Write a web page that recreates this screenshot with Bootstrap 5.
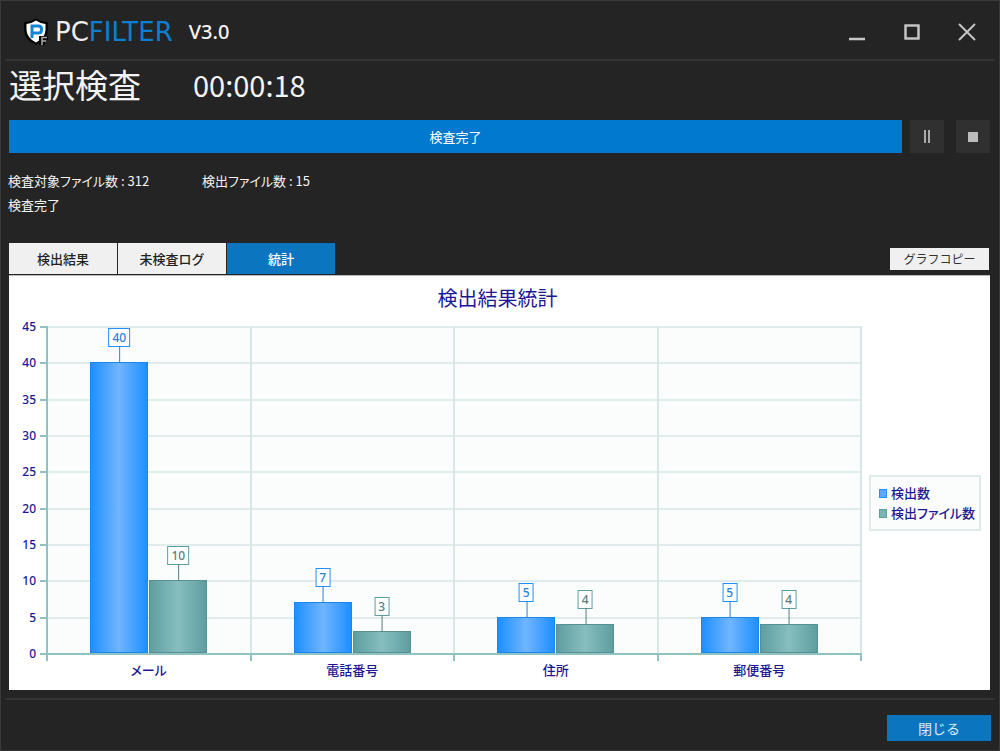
<!DOCTYPE html>
<html lang="ja">
<head>
<meta charset="utf-8">
<meta name="viewport" content="width=device-width, initial-scale=1">
<title>PCFILTER V3.0</title>
<link href="https://cdn.jsdelivr.net/npm/bootstrap@5.3.0/dist/css/bootstrap.min.css" rel="stylesheet">
<style>
  :root { --ink: #242424; --line: #3a3a3a; --blue: #0079cf; --tab: #0b76bf; --navy: #1c1894; --grid: #d6e7e6; --axis: #8fc3c3; --s1: #1e90ff; --s2: #5f9ea0; }
  body { background: var(--ink); color: #f4f4f4; font-family: "Noto Sans CJK JP", sans-serif; font-size: 13px; line-height: 20px; font-feature-settings: "palt"; }
  .app-window { border: 1px solid var(--line); border-bottom-color: #333; }
  .title-bar { height: 58px; padding: 4px 21px 0 22px; }
  .rule-line { height: 2px; background: #333; margin: 0 4px; }
  .brand { font-family: "DejaVu Sans", sans-serif; font-size: 26px; line-height: 30px; color: #eee; }
  .brand span { color: #0c7fd2; }
  .version { font-family: "Noto Sans", sans-serif; font-size: 20px; font-weight: 500; line-height: 30px; color: #f4f4f4; }
  .win-btn { width: 23px; height: 23px; }
  .icon-btn { border: 0; padding: 0; background: none; display: flex; align-items: center; justify-content: center; }
  .scan-head { height: 59px; padding: 0 8px; gap: 52px; }
  .scan-name { font-size: 33px; font-weight: 400; line-height: 46px; margin: 0; font-feature-settings: normal; }
  .scan-time { font-size: 29px; line-height: 46px; font-feature-settings: normal; }
  .scan-bar { height: 33px; padding: 0 9px 0 8px; gap: 8px; }
  .scan-bar .progress { height: 33px; border-radius: 0; background: #333; font-size: 13px; }
  .scan-bar .progress-bar { background: var(--blue); }
  .ctl { width: 34px; height: 33px; background: #303030; }
  .ctl + .ctl { margin-left: 4px; }
  .facts { padding: 16px 7px 0; line-height: 24px; height: 90px; }
  .fact-a { width: 194px; }
  .tabs-row { padding: 0 10px 0 8px; height: 32px; }
  .tab-btn { width: 108px; height: 31px; border: 0; background: #f0f0f0; color: #222; font-weight: 500; padding: 0; }
  .tab-btn.active { background: var(--tab); color: #fff; }
  .copy-btn { width: 99px; height: 22px; border: 0; background: #f0f0f0; color: #333; padding: 0; margin-top: 5px; line-height: 20px; font-size: 12px; }
  .panel { margin: 0 9px 0 8px; background: #fff; color: var(--navy); padding-bottom: 35px; border-top: 1px solid #bbb; }
  .chart-title { font-size: 20px; font-weight: 400; line-height: 30px; height: 50px; padding: 7px 4px 0 0; margin: 0; text-align: center; }
  .y-axis { width: 37px; font: 500 12px/1px "Noto Sans", sans-serif; padding-bottom: 1px; }
  .y-axis div { height: 1px; padding-right: 10px; text-align: right; position: relative; }
  .y-axis div::after { content: ""; position: absolute; right: 0; top: 0; width: 6px; height: 2px; background: var(--axis); }
  .plot { background: #fbfdfc; border-left: 2px solid var(--axis); border-bottom: 2px solid var(--axis); border-right: 2px solid var(--grid); }
  .grid-row { border-top: 2px solid #e0eceb; }
  .cat { flex: 1 1 0; position: relative; gap: 1px; }
  .cat + .cat { border-left: 2px solid var(--grid); }
  .cat::after { content: ""; position: absolute; left: -2px; top: 100%; width: 2px; height: 8px; background: var(--axis); }
  .cat:last-child::before { content: ""; position: absolute; right: -2px; top: 100%; width: 2px; height: 8px; background: var(--axis); }
  .cat-name { position: absolute; top: 100%; left: 0; right: 0; margin-top: 7px; text-align: center; font-weight: 500; }
  .vbar { width: 58px; position: relative; border: 1px solid #1b86ee; background: linear-gradient(90deg, var(--s1), #70b5ff 50%, var(--s1)); }
  .vbar.files { border-color: #58918f; background: linear-gradient(90deg, var(--s2), #87bebf 50%, var(--s2)); }
  .tag { position: absolute; left: 50%; bottom: 100%; transform: translateX(-50%); margin-bottom: 16px; border: 1px solid var(--s1); background: #fff; color: #2b83d6; font: 500 12px/17px "Noto Sans", sans-serif; padding: 0 3px; }
  .tag::after { content: ""; position: absolute; left: 50%; top: 100%; width: 1px; height: 17px; background: currentColor; }
  .files .tag { border-color: var(--s2); color: #56807f; }
  .legend-col { padding: 0 9px 0 7px; }
  .legend-box { width: 112px; border: 2px solid #deebea; background: #fbfdfc; padding: 6px 8px; font-weight: 500; margin-top: 25px; white-space: nowrap; }
  .swatch { width: 8px; height: 9px; flex: none; border: 1px solid var(--s1); background: #5aabff; }
  .swatch.files { border-color: var(--s2); background: #7ab3b3; }
  .bottom-bar { padding: 15px 8px 9px; }
  .close-btn { width: 104px; height: 26px; border: 0; background: var(--tab); color: #d9ecfa; font-size: 14px; line-height: 22px; padding: 0; }
</style>
</head>
<body>
<div class="app-window d-flex flex-column min-vh-100">
  <header class="title-bar d-flex align-items-center">
    <svg width="28" height="28" viewBox="0 0 28 28" aria-hidden="true">
      <path d="M1 4Q8 4 13 0Q18 4 25 4V12Q25 22 13 27Q1 22 1 12Z" fill="#050505"/>
      <path d="M3.500 6Q9 5.500 13 2.500Q17 5.500 22.500 6V12Q22 20 13 24.500Q4 20 3.500 12Z" fill="#fff"/>
      <path d="M9 20V8H15.500Q18.500 8 18.500 11V12Q18.500 15 15.500 15H9" fill="none" stroke="#1383d4" stroke-width="3"/>
      <path d="M16 27V18H25V22H22V27Z" fill="#0a0a0a"/>
      <path d="M19 27V19.500H24M19 23H23" fill="none" stroke="#aaa" stroke-width="1.500"/>
    </svg>
    <div class="brand ms-1 me-3">PC<span>FILTER</span></div>
    <div class="version">V3.0</div>
    <div class="d-flex ms-auto" style="gap:32px">
      <button class="icon-btn win-btn" aria-label="最小化"><svg width="20" height="20"><path d="M2 17H18" stroke="#c8c8c8" stroke-width="2.500"/></svg></button>
      <button class="icon-btn win-btn" aria-label="最大化"><svg width="20" height="20"><path d="M3.500 3.500H16.500V16.500H3.500Z" fill="none" stroke="#c4c4c4" stroke-width="2.500"/></svg></button>
      <button class="icon-btn win-btn" aria-label="閉じる"><svg width="20" height="20"><path d="M2 2L18 18M18 2L2 18" stroke="#c4c4c4" stroke-width="2"/></svg></button>
    </div>
  </header>
  <div class="rule-line"></div>

  <div class="scan-head d-flex">
    <h1 class="scan-name">選択検査</h1>
    <div class="scan-time">00:00:18</div>
  </div>

  <div class="scan-bar d-flex">
    <div class="progress flex-grow-1" role="progressbar" aria-label="検査" aria-valuenow="100" aria-valuemin="0" aria-valuemax="100">
      <div class="progress-bar" style="width:100%">検査完了</div>
    </div>
    <button class="icon-btn ctl" aria-label="一時停止"><svg width="8" height="13"><path d="M2 0V13M6 0V13" stroke="#aaa" stroke-width="2"/></svg></button>
    <button class="icon-btn ctl" aria-label="停止"><svg width="10" height="10"><path d="M0 0H10V10H0Z" fill="#bbb"/></svg></button>
  </div>

  <div class="facts">
    <div class="d-flex"><div class="fact-a">検査対象ファイル数 : 312</div><div>検出ファイル数 : 15</div></div>
    <div>検査完了</div>
  </div>

  <div class="tabs-row d-flex">
    <div class="d-flex" role="tablist" style="gap:1px">
      <button class="tab-btn" role="tab">検出結果</button>
      <button class="tab-btn" role="tab">未検査ログ</button>
      <button class="tab-btn active" role="tab" aria-selected="true">統計</button>
    </div>
    <button class="copy-btn ms-auto">グラフコピー</button>
  </div>

  <main class="panel flex-grow-1 d-flex flex-column">
    <h2 class="chart-title">検出結果統計</h2>
    <div class="d-flex flex-grow-1">
      <div class="y-axis d-flex flex-column justify-content-between">
        <div>45</div><div>40</div><div>35</div><div>30</div><div>25</div><div>20</div><div>15</div><div>10</div><div>5</div><div>0</div>
      </div>
      <div class="plot flex-grow-1 position-relative d-flex flex-column">
        <div class="grid-row flex-fill"></div><div class="grid-row flex-fill"></div><div class="grid-row flex-fill"></div>
        <div class="grid-row flex-fill"></div><div class="grid-row flex-fill"></div><div class="grid-row flex-fill"></div>
        <div class="grid-row flex-fill"></div><div class="grid-row flex-fill"></div><div class="grid-row flex-fill"></div>
        <div class="position-absolute top-0 bottom-0 start-0 end-0 d-flex">
          <div class="cat d-flex align-items-end justify-content-center">
            <div class="vbar" style="height:88.9%"><span class="tag">40</span></div>
            <div class="vbar files" style="height:22.2%"><span class="tag">10</span></div>
            <div class="cat-name">メール</div>
          </div>
          <div class="cat d-flex align-items-end justify-content-center">
            <div class="vbar" style="height:15.6%"><span class="tag">7</span></div>
            <div class="vbar files" style="height:6.7%"><span class="tag">3</span></div>
            <div class="cat-name">電話番号</div>
          </div>
          <div class="cat d-flex align-items-end justify-content-center">
            <div class="vbar" style="height:11.1%"><span class="tag">5</span></div>
            <div class="vbar files" style="height:8.9%"><span class="tag">4</span></div>
            <div class="cat-name">住所</div>
          </div>
          <div class="cat d-flex align-items-end justify-content-center">
            <div class="vbar" style="height:11.1%"><span class="tag">5</span></div>
            <div class="vbar files" style="height:8.9%"><span class="tag">4</span></div>
            <div class="cat-name">郵便番号</div>
          </div>
        </div>
      </div>
      <div class="legend-col d-flex align-items-center">
        <div class="legend-box">
          <div class="d-flex align-items-center gap-1"><span class="swatch"></span>検出数</div>
          <div class="d-flex align-items-center gap-1"><span class="swatch files"></span>検出ファイル数</div>
        </div>
      </div>
    </div>
  </main>

  <footer>
    <div class="rule-line mt-2"></div>
    <div class="bottom-bar d-flex justify-content-end"><button class="close-btn">閉じる</button></div>
  </footer>
</div>
<script src="https://cdn.jsdelivr.net/npm/bootstrap@5.3.0/dist/js/bootstrap.bundle.min.js"></script>
</body>
</html>
